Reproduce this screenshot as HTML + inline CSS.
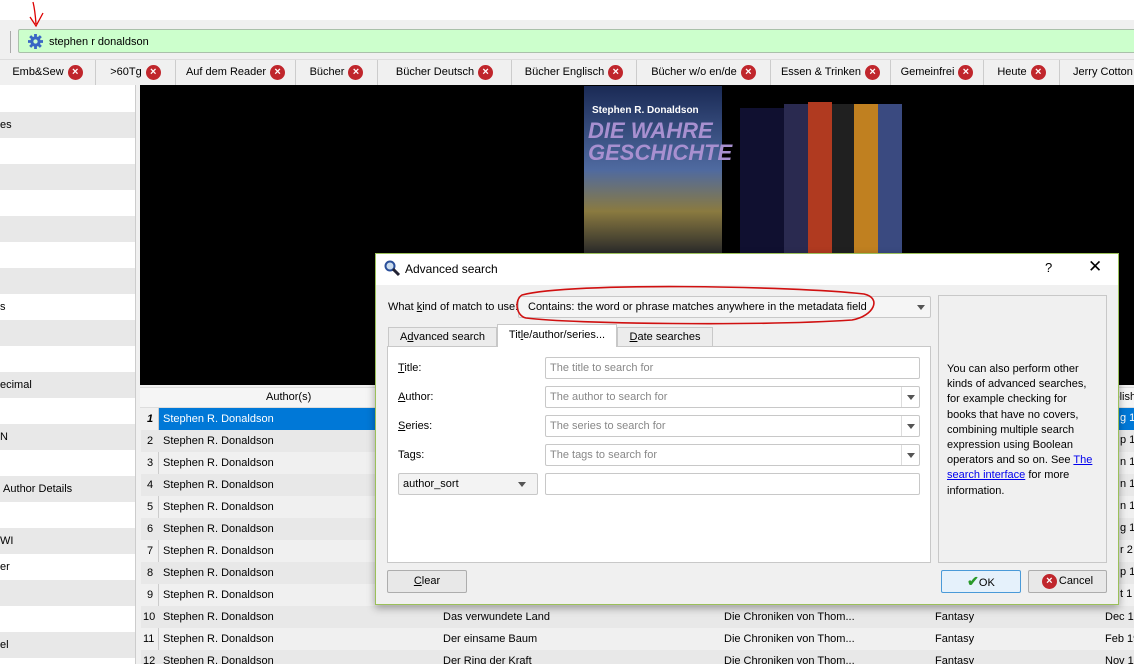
<!DOCTYPE html>
<html><head><meta charset="utf-8"><style>
*{box-sizing:border-box;margin:0;padding:0}
html,body{width:1134px;height:664px;overflow:hidden}
body{position:relative;background:#f0f0f0;font-family:"Liberation Sans",sans-serif;font-size:11px;color:#000;white-space:nowrap}
.a{position:absolute}
.tab{position:absolute;top:60px;height:25px;border-right:1px solid #ccc;background:#f0f0f0;line-height:25px;text-align:center;font-size:11px}
.x{display:inline-block;width:15px;height:15px;border-radius:50%;background:#c0262c;color:#fff;font-size:11px;line-height:15px;text-align:center;font-weight:bold;vertical-align:top;margin-top:5px;margin-left:4px}
.lr{position:absolute;left:0;width:135px;height:26px;line-height:26px;font-size:11px}
.row{position:absolute;left:141px;width:993px;height:22px;line-height:22px;font-size:11px;overflow:hidden}
.row span{position:absolute}
.inp{position:absolute;height:22px;background:#fff;border:1px solid #c8c8c8;border-radius:2px;color:#888;line-height:20px;padding-left:4px;font-size:11px}
.dd{position:absolute;right:0;top:0;width:18px;height:20px;border-left:1px solid #ddd}
.dd:after{content:"";position:absolute;left:5px;top:8px;border:4px solid transparent;border-top:5px solid #555}
.lbl{position:absolute;left:398px;font-size:11px}
.btn{position:absolute;height:23px;border:1px solid #adadad;background:#e8e8e8;border-radius:2px;text-align:center;line-height:21px;font-size:11px}
.dt{position:absolute;left:1120px;width:14px;overflow:hidden}
</style></head><body>
<div class="a" style="left:0;top:0;width:1134px;height:20px;background:#fff"></div>
<svg class="a" style="left:25px;top:0" width="25" height="32"><path d="M8 2 Q10 10 11 24 M5 17 L11 26 L18 13" stroke="#d00" stroke-width="1.3" fill="none"/></svg>
<div class="a" style="left:10px;top:31px;width:1px;height:22px;background:#aaa"></div>
<div class="a" style="left:18px;top:29px;width:1120px;height:24px;background:#ccffcc;border:1px solid #aac0aa;border-radius:2px"></div>
<svg class="a" style="left:28px;top:34px" width="15" height="15" viewBox="0 0 16 16"><circle cx="8" cy="8" r="5.5" fill="#3a67c4"/><g stroke="#3a67c4" stroke-width="3"><path d="M8 0v16M0 8h16M2.3 2.3l11.4 11.4M13.7 2.3L2.3 13.7"/></g><circle cx="8" cy="8" r="2.3" fill="#ccffcc"/></svg>
<div class="a" style="left:49px;top:36px;font-size:11px">stephen r donaldson</div>
<div class="a" style="left:0;top:59px;width:1134px;height:1px;background:#ddd"></div>
<div class="tab" style="left:0;width:96px">Emb&amp;Sew<span class="x">×</span></div>
<div class="tab" style="left:96px;width:80px">&gt;60Tg<span class="x">×</span></div>
<div class="tab" style="left:176px;width:120px">Auf dem Reader<span class="x">×</span></div>
<div class="tab" style="left:296px;width:82px">Bücher<span class="x">×</span></div>
<div class="tab" style="left:378px;width:134px">Bücher Deutsch<span class="x">×</span></div>
<div class="tab" style="left:512px;width:125px">Bücher Englisch<span class="x">×</span></div>
<div class="tab" style="left:637px;width:134px">Bücher w/o en/de<span class="x">×</span></div>
<div class="tab" style="left:771px;width:120px">Essen &amp; Trinken<span class="x">×</span></div>
<div class="tab" style="left:891px;width:93px">Gemeinfrei<span class="x">×</span></div>
<div class="tab" style="left:984px;width:76px">Heute<span class="x">×</span></div>
<div class="tab" style="left:1060px;width:90px;text-align:left;padding-left:13px">Jerry Cotton</div>
<div class="a" style="left:0;top:85px;width:135px;height:579px;background:#fff"></div>
<div class="lr" style="top:112px;background:#e8e8e8">es</div>
<div class="lr" style="top:164px;background:#e8e8e8"></div>
<div class="lr" style="top:216px;background:#e8e8e8"></div>
<div class="lr" style="top:268px;background:#e8e8e8"></div>
<div class="lr" style="top:294px">s</div>
<div class="lr" style="top:320px;background:#e8e8e8"></div>
<div class="lr" style="top:372px;background:#e8e8e8">ecimal</div>
<div class="lr" style="top:424px;background:#e8e8e8">N</div>
<div class="lr" style="top:476px;background:#e8e8e8">&nbsp;Author Details</div>
<div class="lr" style="top:528px;background:#e8e8e8">WI</div>
<div class="lr" style="top:554px">er</div>
<div class="lr" style="top:580px;background:#e8e8e8"></div>
<div class="lr" style="top:632px;background:#e8e8e8">el</div>
<div class="a" style="left:135px;top:85px;width:1px;height:579px;background:#ccc"></div>
<div class="a" style="left:140px;top:85px;width:994px;height:300px;background:#000"></div>
<div class="a" style="left:584px;top:86px;width:138px;height:167px;background:linear-gradient(#1a2a55,#4f6aa0 50%,#8a7a40 75%,#2a2a2a)"></div>
<div class="a" style="left:592px;top:105px;font-weight:bold;color:#fff;font-size:10px">Stephen R. Donaldson</div>
<div class="a" style="left:588px;top:120px;font-weight:bold;color:#a890d0;font-size:22px;font-style:italic;line-height:22px">DIE WAHRE<br>GESCHICHTE</div>
<div class="a" style="left:740px;top:108px;width:44px;height:145px;background:#101030"></div>
<div class="a" style="left:784px;top:104px;width:24px;height:149px;background:#2a2a50"></div>
<div class="a" style="left:808px;top:102px;width:24px;height:151px;background:#b03a20"></div>
<div class="a" style="left:832px;top:104px;width:22px;height:149px;background:#202020"></div>
<div class="a" style="left:854px;top:104px;width:24px;height:149px;background:#c08020"></div>
<div class="a" style="left:878px;top:104px;width:24px;height:149px;background:#3a4a80"></div>
<div class="a" style="left:140px;top:387px;width:994px;height:21px;background:#f5f5f5;border-bottom:1px solid #ddd;border-top:1px solid #ddd"></div>
<div class="a" style="left:266px;top:391px">Author(s)</div>
<div class="a" style="left:1100px;top:391px">Publish</div>
<div class="a" style="left:140px;top:408px;width:19px;height:256px;background:#f0f0f0;border-right:1px solid #ccc"></div>
<div class="row" style="top:408px"><span style="left:18px;width:280px;height:22px;background:#0078d7"></span><span style="left:6px;font-weight:bold;font-style:italic">1</span><span style="left:22px;color:#fff">Stephen R. Donaldson</span></div>
<div class="row" style="top:430px;background:#e8e8e8"><span style="left:6px">2</span><span style="left:22px">Stephen R. Donaldson</span></div>
<div class="row" style="top:452px"><span style="left:6px">3</span><span style="left:22px">Stephen R. Donaldson</span></div>
<div class="row" style="top:474px;background:#e8e8e8"><span style="left:6px">4</span><span style="left:22px">Stephen R. Donaldson</span></div>
<div class="row" style="top:496px"><span style="left:6px">5</span><span style="left:22px">Stephen R. Donaldson</span></div>
<div class="row" style="top:518px;background:#e8e8e8"><span style="left:6px">6</span><span style="left:22px">Stephen R. Donaldson</span></div>
<div class="row" style="top:540px"><span style="left:6px">7</span><span style="left:22px">Stephen R. Donaldson</span></div>
<div class="row" style="top:562px;background:#e8e8e8"><span style="left:6px">8</span><span style="left:22px">Stephen R. Donaldson</span></div>
<div class="row" style="top:584px"><span style="left:6px">9</span><span style="left:22px">Stephen R. Donaldson</span></div>
<div class="row" style="top:606px;background:#e8e8e8"><span style="left:2px">10</span><span style="left:22px">Stephen R. Donaldson</span><span style="left:302px">Das verwundete Land</span><span style="left:583px">Die Chroniken von Thom...</span><span style="left:794px">Fantasy</span><span style="left:964px">Dec 19</span></div>
<div class="row" style="top:628px"><span style="left:2px">11</span><span style="left:22px">Stephen R. Donaldson</span><span style="left:302px">Der einsame Baum</span><span style="left:583px">Die Chroniken von Thom...</span><span style="left:794px">Fantasy</span><span style="left:964px">Feb 19</span></div>
<div class="row" style="top:650px;background:#e8e8e8"><span style="left:2px">12</span><span style="left:22px">Stephen R. Donaldson</span><span style="left:302px">Der Ring der Kraft</span><span style="left:583px">Die Chroniken von Thom...</span><span style="left:794px">Fantasy</span><span style="left:964px">Nov 19</span></div>
<div class="a" style="left:1118px;top:408px;width:16px;height:22px;background:#0078d7"></div>
<div class="dt" style="top:412px;color:#fff">g 1</div>
<div class="dt" style="top:434px">p 1</div><div class="dt" style="top:456px">n 1</div><div class="dt" style="top:478px">n 1</div><div class="dt" style="top:500px">n 1</div><div class="dt" style="top:522px">g 1</div><div class="dt" style="top:544px">r 2</div><div class="dt" style="top:566px">p 1</div><div class="dt" style="top:588px">t 1</div>
<div class="a" style="left:375px;top:253px;width:744px;height:352px;background:#f0f0f0;border:1px solid #9bc05a;box-shadow:0 3px 8px rgba(0,0,0,.35)"></div>
<div class="a" style="left:376px;top:254px;width:742px;height:31px;background:#fff"></div>
<svg class="a" style="left:383px;top:259px" width="18" height="18"><circle cx="7" cy="7" r="4.5" fill="#cde" stroke="#2a4f9a" stroke-width="2"/><path d="M10 10l6 6" stroke="#223" stroke-width="3"/></svg>
<div class="a" style="left:405px;top:262px;font-size:12px">Advanced search</div>
<div class="a" style="left:1045px;top:260px;font-size:13px">?</div>
<div class="a" style="left:1088px;top:257px;font-size:17px">✕</div>
<div class="a" style="left:388px;top:301px">What <u>k</u>ind of match to use:</div>
<div class="inp" style="left:518px;top:296px;width:413px;color:#000;background:#f5f5f5;padding-left:9px">Contains: the word or phrase matches anywhere in the metadata field<div class="dd" style="border:none"></div></div>
<svg class="a" style="left:512px;top:280px" width="370" height="46"><path d="M10 15 C60 2 280 6 352 14 C370 18 362 36 340 40 C250 46 60 44 14 38 C4 36 2 20 10 15 Z" stroke="#d01010" stroke-width="1.6" fill="none"/></svg>
<div class="a" style="left:938px;top:295px;width:169px;height:268px;border:1px solid #c8c8c8;background:#f0f0f0"></div>
<div class="a" style="left:947px;top:362px;width:146px;line-height:15.2px;font-size:11px;white-space:normal">You can also perform other kinds of advanced searches, for example checking for books that have no covers, combining multiple search expression using Boolean operators and so on. See <span style="color:#00e;text-decoration:underline">The search interface</span> for more information.</div>
<div class="a" style="left:387px;top:346px;width:544px;height:217px;background:#fff;border:1px solid #c8c8c8"></div>
<div class="a" style="left:388px;top:327px;width:109px;height:20px;border:1px solid #c8c8c8;background:#ececec;text-align:center;line-height:19px">A<u>d</u>vanced search</div>
<div class="a" style="left:497px;top:324px;width:120px;height:23px;border:1px solid #c8c8c8;border-bottom:none;background:#fff;text-align:center;line-height:21px">Tit<u>l</u>e/author/series...</div>
<div class="a" style="left:617px;top:327px;width:96px;height:20px;border:1px solid #c8c8c8;background:#ececec;text-align:center;line-height:19px"><u>D</u>ate searches</div>
<div class="lbl" style="top:362px"><u>T</u>itle:</div>
<div class="lbl" style="top:391px"><u>A</u>uthor:</div>
<div class="lbl" style="top:420px"><u>S</u>eries:</div>
<div class="lbl" style="top:449px">Ta<u>g</u>s:</div>
<div class="inp" style="left:545px;top:357px;width:375px">The title to search for</div>
<div class="inp" style="left:545px;top:386px;width:375px">The author to search for<div class="dd"></div></div>
<div class="inp" style="left:545px;top:415px;width:375px">The series to search for<div class="dd"></div></div>
<div class="inp" style="left:545px;top:444px;width:375px">The tags to search for<div class="dd"></div></div>
<div class="inp" style="left:398px;top:473px;width:140px;color:#000;background:#f3f3f3">author_sort<div class="dd" style="border:none;right:6px"></div></div>
<div class="inp" style="left:545px;top:473px;width:375px"></div>
<div class="btn" style="left:387px;top:570px;width:80px"><u>C</u>lear</div>
<div class="btn" style="left:941px;top:570px;width:80px;border-color:#4a9ad8;background:#e5f1fb"><span style="color:#2a9a2a;font-weight:bold;font-size:14px">✔</span>OK</div>
<div class="btn" style="left:1028px;top:570px;width:79px"><span class="x" style="margin:3px 2px 0 0">×</span>Cancel</div>
</body></html>
